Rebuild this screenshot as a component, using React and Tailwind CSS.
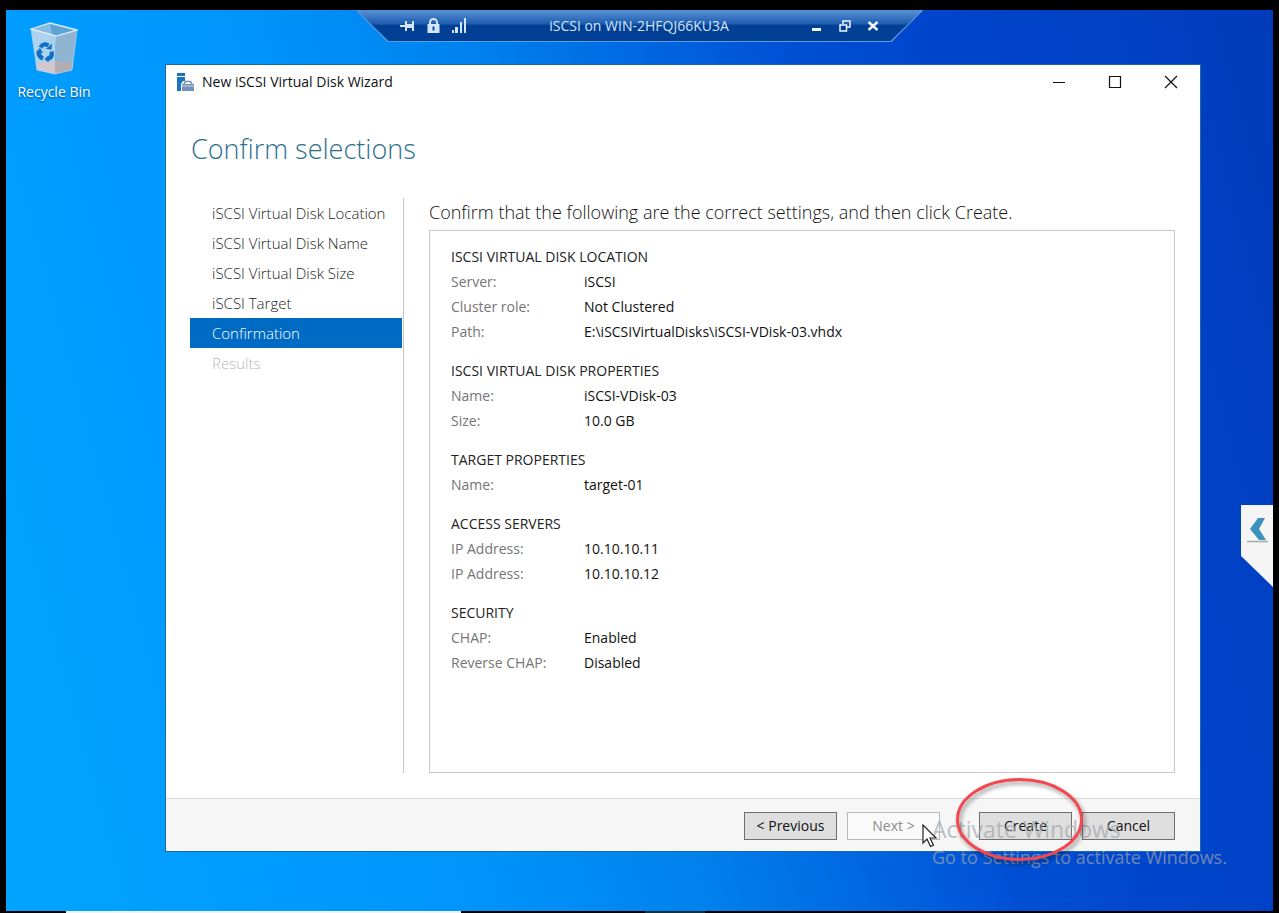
import { useState } from 'react'

const steps = [
  { label: 'iSCSI Virtual Disk Location' },
  { label: 'iSCSI Virtual Disk Name' },
  { label: 'iSCSI Virtual Disk Size' },
  { label: 'iSCSI Target' },
  { label: 'Confirmation' },
  { label: 'Results', disabled: true },
]

const sections = [
  {
    title: 'ISCSI VIRTUAL DISK LOCATION',
    rows: [
      ['Server:', 'iSCSI'],
      ['Cluster role:', 'Not Clustered'],
      ['Path:', 'E:\\iSCSIVirtualDisks\\iSCSI-VDisk-03.vhdx'],
    ],
  },
  {
    title: 'ISCSI VIRTUAL DISK PROPERTIES',
    rows: [
      ['Name:', 'iSCSI-VDisk-03'],
      ['Size:', '10.0 GB'],
    ],
  },
  { title: 'TARGET PROPERTIES', rows: [['Name:', 'target-01']] },
  {
    title: 'ACCESS SERVERS',
    rows: [
      ['IP Address:', '10.10.10.11'],
      ['IP Address:', '10.10.10.12'],
    ],
  },
  {
    title: 'SECURITY',
    rows: [
      ['CHAP:', 'Enabled'],
      ['Reverse CHAP:', 'Disabled'],
    ],
  },
]

function RecycleBin() {
  return (
    <svg width="48" height="54" viewBox="0 0 48 54" aria-hidden="true">
      <path d="M1 7 L26 14 L25 52 L7 48 Z" fill="#add2ed" />
      <path d="M26 14 L47 8 L42 48 L25 52 Z" fill="#8fb4d2" />
      <path d="M6 41 L25 39 L25 52 L7 48 Z" fill="#cfc9cf" />
      <path d="M25 39 L43 41 L42 48 L25 52 Z" fill="#b3acb0" />
      <path d="M1 7 L20 1 L47 8 L26 14 Z" fill="#5fa3d4" />
      <path d="M20 1 L22 12.500 L1 7 Z" fill="#88bbdf" />
      <path d="M1 7 L20 1 L47 8 L26 14 Z" fill="none" stroke="#dcebf6" strokeWidth="1.300" />
      <path d="M1 7 L7 48 L25 52 L42 48 L47 8" fill="none" stroke="#b9d3e6" strokeWidth="0.700" />
      <g fill="none" stroke="#0e6fc8" strokeWidth="4.200">
        <path d="M10.500 25.500 Q13 20.500 18.500 23.500" />
        <path d="M21.500 29.500 Q23 35.500 17.500 37" />
        <path d="M13 36.500 Q7.500 34 9 29" />
      </g>
      <g fill="#0e6fc8">
        <path d="M16 27 L21.500 27.500 L22 21.500 Z" />
        <path d="M18.500 33.500 L14.500 37 L18.500 40.500 Z" />
        <path d="M6 30.500 L10 26 L13 31 Z" />
      </g>
    </svg>
  )
}

function WizardIcon() {
  return (
    <svg width="18" height="18" viewBox="0 0 18 18" aria-hidden="true">
      <path d="M1 0h8v3H1z M1 4h8v4H7l-2 3v7H1z" fill="#1b74bd" />
      <path d="M8 11 L9.500 8.500 H14.500 L16 11" fill="none" stroke="#7291b8" strokeWidth="1.500" />
      <path d="M6 11h12v7H6z" fill="#7291b8" />
      <path d="M6 13h12" stroke="#c9d6e6" strokeWidth="1" />
    </svg>
  )
}

function ConnectionBar() {
  return (
    <div className="absolute inset-x-0 top-0 flex justify-center">
      <div className="w-[568px] bg-[#5f9be0] pb-px [clip-path:polygon(0_0,100%_0,calc(100%-32px)_100%,32px_100%)]">
        <div className="flex h-[31px] items-center justify-between bg-linear-to-b from-[#5a92d8] from-0% via-[#1c5cae] via-45% to-[#003f93] to-50% px-11 text-[#d3e6fa] [clip-path:polygon(1px_0,calc(100%-1px)_0,calc(100%-33px)_100%,33px_100%)]">
          <div className="flex items-center gap-3">
            <button aria-label="Pin">
              <svg width="15" height="12" viewBox="0 0 15 12" fill="currentColor">
                <path d="M0 5h5V1h2v3h5V1h2v10h-2V8H7v3H5V7H0z" />
              </svg>
            </button>
            <button aria-label="Security">
              <svg width="13" height="15" viewBox="0 0 13 15">
                <path d="M3 7V4.500a3.500 3.500 0 0 1 7 0V7" fill="none" stroke="currentColor" strokeWidth="2" />
                <path d="M0.500 6h12v9h-12z" fill="currentColor" />
                <path d="M5.500 8.500h2v4h-2z" fill="#12509e" />
              </svg>
            </button>
            <button aria-label="Connection quality">
              <svg width="15" height="15" viewBox="0 0 15 15" fill="currentColor">
                <path d="M0 12h2v3H0z M3 9h3v6H3z M8 4h2v11H8z M12 0h2v15h-2z" />
              </svg>
            </button>
          </div>
          <span className="text-[14px] leading-5">iSCSI on WIN-2HFQJ66KU3A</span>
          <div className="flex items-center gap-4 text-[#eef6ff]">
            <button aria-label="Minimize">
              <svg width="12" height="12" viewBox="0 0 12 12" fill="currentColor">
                <path d="M1 8h9v3H1z" />
              </svg>
            </button>
            <button aria-label="Restore">
              <svg width="12" height="12" viewBox="0 0 12 12" fill="none" stroke="currentColor" strokeWidth="1.500">
                <path d="M1 5h6.500v6H1z M4 4V1h7v6H8" />
              </svg>
            </button>
            <button aria-label="Close">
              <svg width="12" height="12" viewBox="0 0 12 12" stroke="currentColor" strokeWidth="2.400">
                <path d="M1.500 2l9 8M10.500 2l-9 8" />
              </svg>
            </button>
          </div>
        </div>
      </div>
    </div>
  )
}

function TitleBar() {
  return (
    <header className="flex h-[34px] items-center pr-[22px] pl-[10px]">
      <WizardIcon />
      <h1 className="flex-1 pl-2 text-[14px] leading-5 text-[#111]">New iSCSI Virtual Disk Wizard</h1>
      <div className="flex items-center gap-[42px] text-[#111]">
        <button aria-label="Minimize">
          <svg width="14" height="14" viewBox="0 0 14 14" stroke="currentColor">
            <path d="M1 7.500h12" />
          </svg>
        </button>
        <button aria-label="Maximize">
          <svg width="14" height="14" viewBox="0 0 14 14" fill="none" stroke="currentColor" strokeWidth="1.200">
            <path d="M1.500 1.500h11v11h-11z" />
          </svg>
        </button>
        <button aria-label="Close">
          <svg width="14" height="14" viewBox="0 0 14 14" stroke="currentColor" strokeWidth="1.200">
            <path d="M1 1l12 12M13 1L1 13" />
          </svg>
        </button>
      </div>
    </header>
  )
}

function Pointer() {
  return (
    <svg className="pointer-events-none absolute top-3 left-[75px] z-20" width="16" height="25" viewBox="0 0 16 25" aria-hidden="true">
      <path
        d="M1 1v18l4-4 3.500 7.500 3-1.300L8 14h6z"
        fill="#fff"
        stroke="#222"
        strokeWidth="1.200"
      />
    </svg>
  )
}

function Highlight() {
  return (
    <svg
      className="pointer-events-none absolute -top-[35px] -left-[24px] z-20 drop-shadow-[2px_3px_2px_rgba(0,0,0,0.4)]"
      width="129"
      height="85"
      viewBox="0 0 129 85"
      aria-hidden="true"
    >
      <ellipse cx="64.500" cy="42.500" rx="62" ry="40" fill="none" stroke="#f4474f" strokeWidth="3" />
    </svg>
  )
}

const buttonClass = 'h-7 w-[93px] border border-[#6f6f6f] bg-[#dedede] text-[14px] leading-5 text-[#111]'

export default function App() {
  const [current, setCurrent] = useState(4)

  return (
    <div className="flex min-h-screen flex-col bg-black px-1.5 pt-[10px] font-['Open_Sans','Noto_Sans',sans-serif]">
      <div className="relative flex flex-1 bg-[linear-gradient(75deg,#00a4ff_0%,#009cff_17%,#0096fc_30%,#0082ee_46%,#0066e0_58%,#0050d4_67%,#0046cc_76%,#0040c4_90%,#003cba_100%)]">
        <ConnectionBar />

        <div className="flex w-24 flex-col items-center gap-2 pt-3">
          <RecycleBin />
          <span className="text-[14px] leading-4 whitespace-nowrap text-white [text-shadow:0_1px_2px_rgba(0,0,0,0.5)]">
            Recycle Bin
          </span>
        </div>

        <main className="mt-[54px] mr-[72px] mb-[59px] ml-[63px] flex flex-1 flex-col border border-[#1a6aa8] bg-white">
          <TitleBar />
          <h2 className="px-[25px] pt-7 text-[27px] leading-[44px] font-light text-[#2b6f8f]">Confirm selections</h2>

          <div className="flex flex-1 gap-[25px] pt-[27px] pr-[25px] pb-[25px] pl-6">
            <nav className="w-[214px] border-r border-[#c8c8c8] pr-px">
              <ul>
                {steps.map((step, i) => (
                  <li key={step.label}>
                    <button
                      disabled={step.disabled}
                      onClick={() => setCurrent(i)}
                      className={`block h-[30px] w-full pl-[22px] text-left text-[15px] leading-5 whitespace-nowrap ${
                        i === current
                          ? 'bg-[#006bc4] font-light text-white'
                          : step.disabled
                            ? 'font-light text-[#b8b8b8]'
                            : 'font-light text-[#222]'
                      }`}
                    >
                      {step.label}
                    </button>
                  </li>
                ))}
              </ul>
            </nav>

            <section className="flex flex-1 flex-col">
              <p className="pb-1 text-[18px] leading-7 font-light text-[#111]">
                Confirm that the following are the correct settings, and then click Create.
              </p>
              <div className="flex flex-1 flex-col gap-[14px] border border-[#c8c8c8] px-[21px] py-[13px] text-[14px] leading-[25px]">
                {sections.map((section) => (
                  <div key={section.title}>
                    <h3 className="text-[#222]">{section.title}</h3>
                    <dl>
                      {section.rows.map(([name, value]) => (
                        <div key={name + value} className="flex">
                          <dt className="w-[133px] text-[#757575]">{name}</dt>
                          <dd className="text-[#111]">{value}</dd>
                        </div>
                      ))}
                    </dl>
                  </div>
                ))}
              </div>
            </section>
          </div>

          <footer className="flex items-start justify-end border-t border-[#dcdcdc] bg-[#f6f6f6] pt-[13px] pr-[25px] pb-[11px]">
            <button className={buttonClass}>&lt; Previous</button>
            <div className="relative ml-[10px]">
              <button disabled className="block h-7 w-[93px] border border-[#b4b8c0] bg-[#fafafa] text-[14px] leading-5 text-[#8c8c8c]">
                Next &gt;
              </button>
              <Pointer />
            </div>
            <div className="relative ml-[39px]">
              <button className={`block ${buttonClass}`}>Create</button>
              <Highlight />
            </div>
            <button className={`ml-[10px] ${buttonClass}`}>Cancel</button>
          </footer>
        </main>

        <div className="pointer-events-none absolute right-[50px] bottom-10 z-10 w-[291px] whitespace-nowrap text-[#a0a5ab]/70">
          <p className="text-[23px] leading-7">Activate Windows</p>
          <p className="text-[18px] leading-7">Go to Settings to activate Windows.</p>
        </div>

        <button
          aria-label="Open panel"
          className="absolute top-[495px] right-0 h-[82px] w-8 bg-[#f5f5f5] pl-1.5 [clip-path:polygon(0_0,100%_0,100%_100%,0_51px)]"
        >
          <svg className="mb-8" width="22" height="26" viewBox="0 0 22 26" aria-hidden="true">
            <path d="M11 1h7l-6 11 7 11h-7L3 12z" fill="#3c93bd" />
            <path d="M0 24.500h21" stroke="#a8a8a8" strokeWidth="1.500" />
          </svg>
        </button>
      </div>

      {/* top edge of the host taskbar */}
      <div className="flex h-0.5 pl-[60px]">
        <div className="w-[395px] bg-[#eef4f8]" />
        <div className="ml-[184px] w-[60px] bg-[#12303c]" />
      </div>
    </div>
  )
}
